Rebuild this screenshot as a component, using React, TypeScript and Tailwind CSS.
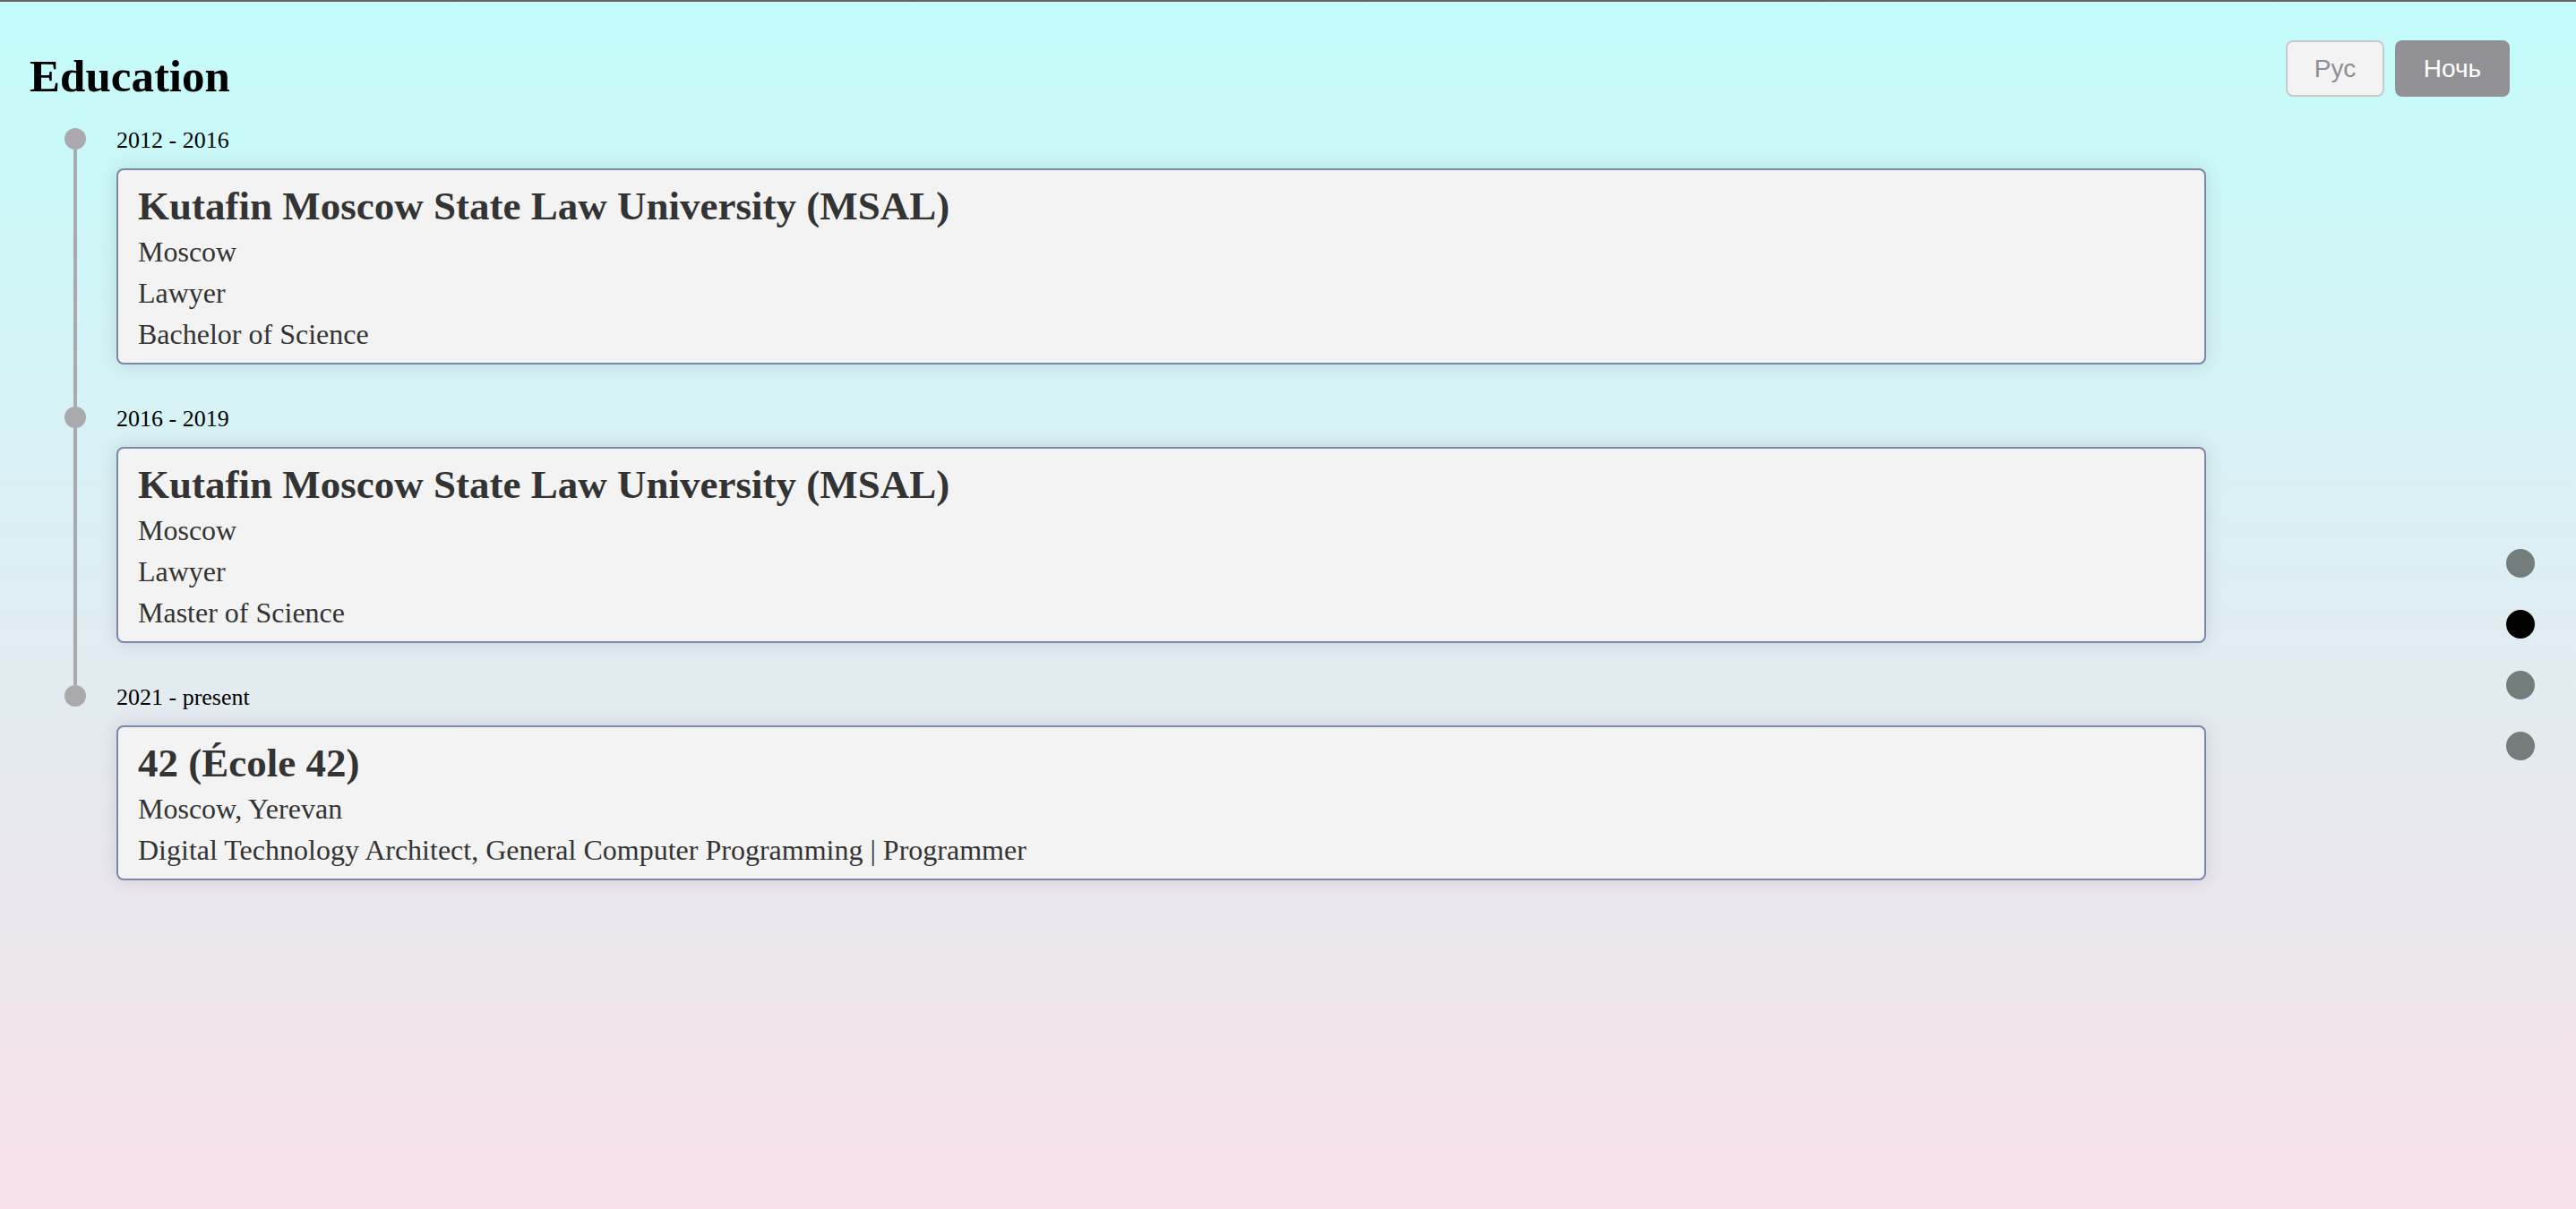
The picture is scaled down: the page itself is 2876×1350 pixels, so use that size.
import type React from "react"

type Study = {
    period: string
    school: string
    lines: string[]
}

const studies: Study[] = [
    {
        period: "2012 - 2016",
        school: "Kutafin Moscow State Law University (MSAL)",
        lines: ["Moscow", "Lawyer", "Bachelor of Science"],
    },
    {
        period: "2016 - 2019",
        school: "Kutafin Moscow State Law University (MSAL)",
        lines: ["Moscow", "Lawyer", "Master of Science"],
    },
    {
        period: "2021 - present",
        school: "42 (École 42)",
        lines: ["Moscow, Yerevan", "Digital Technology Architect, General Computer Programming | Programmer"],
    },
]

const App: React.FC = () => {
    return (
        <div className="min-h-screen border-t-2 border-[#636566] bg-linear-to-b from-[#c3fcfb] to-[#f6dfe9] font-['Liberation_Serif',serif]">
            <header className="flex items-start justify-between pl-[33px] pr-[74px] pt-[43px]">
                <h2 className="mt-[11px] text-[51px] font-bold leading-[58px] text-black">Education</h2>
                <div className="flex gap-3 font-['Liberation_Sans',Arial,sans-serif] text-[28px]">
                    <button className="flex h-[63px] w-[110px] items-center justify-center rounded-lg border-2 border-[#cacaca] bg-[#f3f3f3] text-[#8e8e93]">
                        Рус
                    </button>
                    <button className="flex h-[63px] w-[128px] items-center justify-center rounded-lg bg-[#929296] text-white">
                        Ночь
                    </button>
                </div>
            </header>

            <div className="mt-[29px] flex items-start">
                <ol className="w-[2463px] shrink-0 pl-[72px]">
                    {studies.map((study: Study, index: number) => {
                        const last = index === studies.length - 1
                        return (
                            <li key={index} className="flex">
                                <div className="mr-[34px] flex w-6 shrink-0 flex-col items-center">
                                    <span className="h-6 w-6 shrink-0 rounded-full bg-[#a9a9ae]"></span>
                                    {!last && <span className="w-1 flex-1 bg-[#a9a9ae]"></span>}
                                </div>
                                <div className={last ? "flex-1" : "flex-1 pb-[47px]"}>
                                    <div className="pt-[2px] text-[26px] leading-[24px] text-black">{study.period}</div>
                                    <div className="mt-[19px] rounded-lg border-2 border-[#7b88ab] bg-[#f3f3f3] pb-[9px] pl-[22px] pt-[14px] text-[#333333] shadow-[0_0_20px_rgba(0,0,0,0.12)]">
                                        <h3 className="mb-[2px] text-[45px] font-bold leading-[52px]">{study.school}</h3>
                                        {study.lines.map((line: string, lineIndex: number) => (
                                            <p key={lineIndex} className="text-[32px] leading-[46px]">
                                                {line}
                                            </p>
                                        ))}
                                    </div>
                                </div>
                            </li>
                        )
                    })}
                </ol>

                <nav className="ml-auto mr-[46px] mt-[470px] flex flex-col gap-9">
                    <span className="h-8 w-8 rounded-full bg-[#747c7c]"></span>
                    <span className="h-8 w-8 rounded-full bg-black"></span>
                    <span className="h-8 w-8 rounded-full bg-[#747c7c]"></span>
                    <span className="h-8 w-8 rounded-full bg-[#747c7c]"></span>
                </nav>
            </div>
        </div>
    )
}

export default App
